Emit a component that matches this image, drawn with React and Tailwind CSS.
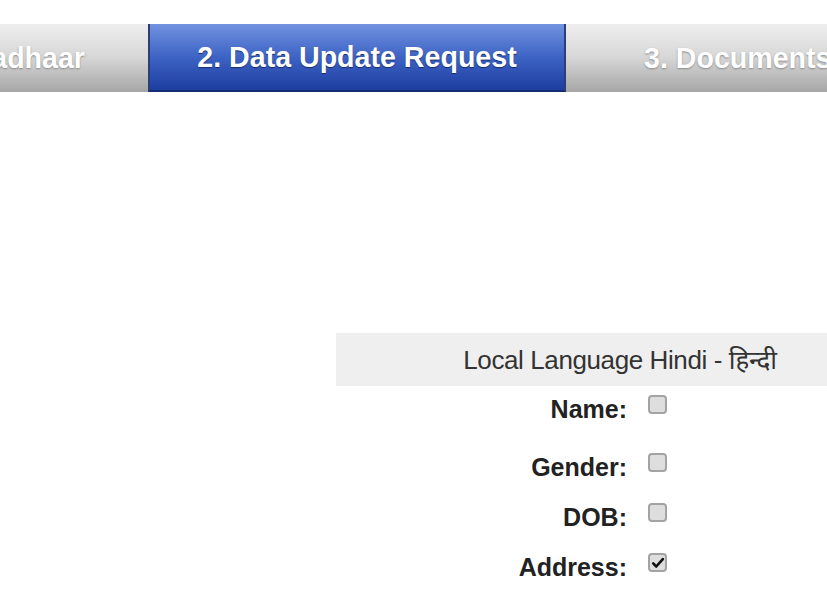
import React from "react";

const font = { fontFamily: '"Liberation Sans", Arial, "Noto Sans", sans-serif' };

function Tab({ children, active, className = "" }) {
  if (active) {
    return (
      <div className={`flex h-full shrink-0 items-center justify-center border-x-2 border-b-2 border-x-[#2c3f74] border-b-[#142c70] bg-linear-to-b from-[#7393e0] via-[#3d63c4] to-[#1d3ea0] ${className}`}>
        <span className="whitespace-nowrap text-[28.6px] font-bold text-white [text-shadow:0_1px_1px_#1a2c66]">{children}</span>
      </div>
    );
  }
  return (
    <div className={`flex h-full items-center overflow-hidden bg-linear-to-b from-[#efefef] via-[#d6d6d6] to-[#a6a6a6] ${className}`}>
      <span className="whitespace-nowrap text-[28.6px] font-bold text-white [text-shadow:0_1px_2px_#8a8a8a]">{children}</span>
    </div>
  );
}

function Checkbox({ checked }) {
  return (
    <div className="mb-[10px] flex h-[19px] w-[19px] shrink-0 items-center justify-center rounded-[4px] border-2 border-[#a3a3a3] bg-[#dedede]">
      {checked && (
        <svg viewBox="0 0 16 16" className="h-[14px] w-[14px]">
          <path d="M2.5 8.5 L6 12 L13.5 3.5" fill="none" stroke="#111" strokeWidth="3" strokeLinecap="round" strokeLinejoin="round" />
        </svg>
      )}
    </div>
  );
}

function Row({ label, checked, className = "" }) {
  return (
    <div className={`flex h-[25px] items-center ${className}`}>
      <div className="w-[291px] text-right text-[25px] font-bold leading-none text-[#222]">{label}</div>
      <div className="ml-[21px]">
        <Checkbox checked={checked} />
      </div>
    </div>
  );
}

export default function App() {
  return (
    <div className="h-[595px] w-[827px] overflow-hidden bg-white" style={font}>
      {/* step tabs */}
      <div className="mt-[24px] flex h-[68px]">
        <Tab className="w-[148px] shrink-0 justify-end pr-[63px]">1. Aadhaar</Tab>
        <Tab active className="w-[418px]">2. Data Update Request</Tab>
        <Tab className="flex-1 justify-start pl-[78px]">3. Documents</Tab>
      </div>

      {/* fields to update */}
      <div className="ml-[336px] mt-[241px] w-[568px]">
        <div className="flex h-[53px] items-center justify-center bg-[#efefef] pt-[1px] text-[26px] text-[#333]">
          <span className="tracking-[-0.4px]">Local Language Hindi - हिन्दी</span>
        </div>
        <Row label="Name:" className="mt-[11px]" />
        <Row label="Gender:" className="mt-[33px]" />
        <Row label="DOB:" className="mt-[25px]" />
        <Row label="Address:" checked className="mt-[25px]" />
      </div>
    </div>
  );
}
